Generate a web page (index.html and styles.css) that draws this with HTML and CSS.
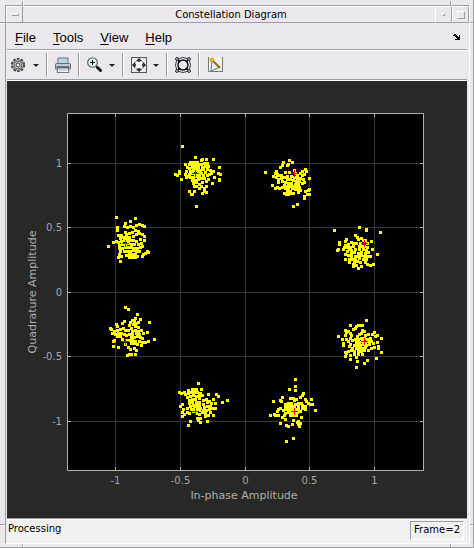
FILE: index.html
```html
<!DOCTYPE html>
<html lang="en">

<head>
  <meta charset="UTF-8">
  <meta name="viewport" content="width=device-width, initial-scale=1.0">
  <title>Constellation Diagram</title>
  <link rel="stylesheet" href="styles.css">
</head>

<body>

  <div class="window">
    <span class="notch notch-top notch-left"></span>
    <span class="notch notch-top notch-right"></span>
    <span class="notch notch-bottom notch-left"></span>
    <span class="notch notch-bottom notch-right"></span>
    <span class="notch-side side-top side-left"></span>
    <span class="notch-side side-top side-right"></span>
    <span class="notch-side side-bottom side-left"></span>
    <span class="notch-side side-bottom side-right"></span>

    <div class="frame">
      <header class="titlebar">
        <button class="title-button" aria-label="Window menu"><span class="bump bump-menu"></span></button>
        <h1>Constellation Diagram</h1>
        <button class="title-button" aria-label="Minimize"><span class="bump bump-min"></span></button>
        <button class="title-button" aria-label="Maximize"><span class="bump bump-max"></span></button>
      </header>

      <nav class="menubar">
        <button><u>F</u>ile</button>
        <button><u>T</u>ools</button>
        <button><u>V</u>iew</button>
        <button><u>H</u>elp</button>
        <button class="dock" aria-label="Dock">
          <svg width="8" height="7" viewBox="0 0 8 7" shape-rendering="crispEdges">
            <path d="M0 1h1v-1h2v1h1v1h1v1h1v-2h1v5h-5v-1h2v-1h-1v-1h-1v-1h-2z" fill="#000" />
          </svg>
        </button>
      </nav>

      <div class="toolbar">
        <div class="tool-group">
          <button class="tool" aria-label="Settings">
            <svg width="16" height="16" viewBox="0 0 16 16">
              <circle cx="7" cy="8" r="6.2" fill="none" stroke="#444" stroke-width="1.8" stroke-dasharray="2.6 1.3" />
              <circle cx="7" cy="8" r="4.4" fill="#ddd" stroke="#555" stroke-width="2.4" />
              <circle cx="7" cy="8" r="4.5" fill="none" stroke="#aaa" stroke-width="1.2" />
              <circle cx="7" cy="8" r="2" fill="#f4f4f4" stroke="#333" />
            </svg>
          </button>
          <button class="caret" aria-label="Settings options"></button>
        </div>
        <div class="tool-group">
          <button class="tool" aria-label="Print">
            <svg width="16" height="16" viewBox="0 0 16 16">
              <path d="M3 1h10v6H3z" fill="#d5e6f4" stroke="#668" />
              <path d="M4 3h8M4 5h8" stroke="#9dc3de" />
              <rect x="0.5" y="6.5" width="15" height="6" rx="1" fill="#a9adb4" stroke="#686c75" />
              <path d="M1 8h14" stroke="#dce0e5" />
              <path d="M2 10.5h12" stroke="#42474f" stroke-width="2" />
              <path d="M3 11h10l1 4.5H2z" fill="#f4f7fa" stroke="#777b84" />
              <path d="M4 13h8" stroke="#7eb2df" />
            </svg>
          </button>
        </div>
        <div class="tool-group">
          <button class="tool" aria-label="Zoom in">
            <svg width="16" height="16" viewBox="0 0 16 16">
              <path d="M9 9l2 2" stroke="#555" stroke-width="2" />
              <path d="M10.5 10.5l3 3" stroke="#111" stroke-width="3" stroke-linecap="round" />
              <circle cx="5.5" cy="5.5" r="4.8" fill="#e0f3f8" stroke="#555" stroke-width="1.1" />
              <path d="M3 5.5h5M5.5 3v5" stroke="#000" />
            </svg>
          </button>
          <button class="caret" aria-label="Zoom options"></button>
        </div>
        <div class="tool-group">
          <button class="tool" aria-label="Fit to view">
            <svg width="16" height="16" viewBox="0 0 16 16">
              <rect x="0.5" y="0.5" width="15" height="15" fill="#e7eef0" stroke="#555" />
              <rect x="4.5" y="4.5" width="7" height="7" fill="#fff" stroke="#bbb" />
              <path d="M8 1l3 3H5zM8 15l3-3H5zM1 8l3-3v6zM15 8l-3-3v6z" fill="#222" />
              <path d="M8 3v2M8 11v2M3 8h2M11 8h2" stroke="#444" stroke-width="2" />
            </svg>
          </button>
          <button class="caret" aria-label="Fit options"></button>
        </div>
        <div class="tool-group">
          <button class="tool" aria-label="Symbol trajectory">
            <svg width="16" height="16" viewBox="0 0 16 16" fill="none" stroke="#111">
              <path d="M2 2Q8 -1 14 2Q17 8 14 14Q8 17 2 14Q-1 8 2 2z" stroke="#333a66" />
              <circle cx="8" cy="8" r="5" stroke-width="1.4" />
              <path d="M3 3L6 4M13 3L10 4M3 13L6 12M13 13L10 12M3 3L4 6M13 3L12 6M3 13L4 10M13 13L12 10" />
              <g fill="#fff">
                <circle cx="2" cy="2" r="1.4" />
                <circle cx="14" cy="2" r="1.4" />
                <circle cx="2" cy="14" r="1.4" />
                <circle cx="14" cy="14" r="1.4" />
              </g>
            </svg>
          </button>
        </div>
        <div class="tool-group">
          <button class="tool" aria-label="Signal measurements">
            <svg width="16" height="16" viewBox="0 0 16 16">
              <rect x="1" y="0" width="14" height="15" fill="#f2f0e9" />
              <path d="M1.5 0v14.5H16M15.5 0v14" fill="none" stroke="#777" />
              <path d="M5 3L4 14L13 10z" fill="#e7f1f7" stroke="#4d7fa8" />
              <path d="M5 3L13 11" stroke="#986a16" stroke-width="2" />
              <circle cx="5" cy="3" r="2" fill="#f5b51c" stroke="#bc7e0e" stroke-width="0.6" />
            </svg>
          </button>
        </div>
      </div>

      <main class="plot">
        <svg viewBox="0 0 460 437" role="img" aria-label="Constellation Diagram">
          <rect class="axes" x="60.5" y="32.5" width="356" height="357" />
          <g id="grid"></g>
          <g id="clusters"></g>
          <g id="reference"></g>
          <text class="label" x="237" y="418">In-phase Amplitude</text>
          <text class="label" transform="translate(29 211) rotate(-90)">Quadrature Amplitude</text>
        </svg>
      </main>

      <footer class="statusbar">
        <span>Processing</span>
        <output class="frame-count">Frame=2</output>
      </footer>
    </div>
  </div>

  <script src="script.js"></script>
</body>

</html>
```

FILE: styles.css
```css
* {
  box-sizing: border-box;
}

body {
  margin: 0;
  background-color: #eae8ec;
  color: #000;
  font-family: "DejaVu Sans", sans-serif;
  font-size: 10px;
}

button {
  margin: 0;
  padding: 0;
  border: none;
  background: none;
  color: inherit;
  font: inherit;
}

.window {
  position: relative;
  min-height: 100vh;
  padding: 5px 3px 3px 5px;
  border-right: 1px solid #9f9da3;
  border-bottom: 1px solid #9f9da3;
  display: flex;
  flex-direction: column;
}

.frame {
  flex: 1;
  display: flex;
  flex-direction: column;
  border: 1px solid #fff;
  border-top-color: #9f9da3;
  border-left-color: #9f9da3;
}

/* resize handle marks on the outer border */
.notch,
.notch-side {
  position: absolute;
  background-color: #9f9da3;
}

.notch {
  width: 2px;
  height: 5px;
  border-right: 1px solid #fff;
}

.notch-side {
  width: 5px;
  height: 2px;
  border-bottom: 1px solid #fff;
}

.notch-top {
  top: 1px;
}

.notch-bottom {
  bottom: 0;
  height: 3px;
}

.notch-left {
  left: 22px;
}

.notch-right {
  right: 21px;
}

.side-top {
  top: 22px;
}

.side-bottom {
  bottom: 21px;
}

.side-left {
  left: 0;
}

.side-right {
  right: 0;
  width: 3px;
}

.titlebar {
  display: flex;
  height: 17px;
}

.titlebar h1 {
  flex: 1;
  margin: 0;
  padding-left: 4px;
  border-top: 1px solid #fff;
  border-bottom: 1px solid #9f9da3;
  font-size: 10px;
  font-weight: normal;
  line-height: 15px;
  text-align: center;
}

.title-button {
  width: 17px;
  display: flex;
  align-items: center;
  justify-content: center;
  border: 1px solid #fff;
  border-right-color: #9f9da3;
  border-bottom-color: #9f9da3;
}

.bump {
  border: 1px solid #fff;
  border-right-color: #9f9da3;
  border-bottom-color: #9f9da3;
}

.bump-menu {
  width: 8px;
  height: 3px;
}

.bump-min {
  width: 3px;
  height: 3px;
}

.bump-max {
  width: 8px;
  height: 8px;
}

.menubar {
  display: flex;
  gap: 17px;
  height: 28px;
  margin: 0 2px 0 1px;
  padding: 1px 6px 0 8px;
  border-bottom: 1px solid #fff;
  box-shadow: inset 0 -1px #9f9da3;
  font-family: "Liberation Sans", Arial, sans-serif;
  font-size: 13px;
}

.menubar u {
  text-underline-offset: 2px;
}

.dock {
  display: flex;
  align-items: center;
  margin-left: auto;
}

.toolbar {
  display: flex;
  height: 30px;
  margin: 0 2px 0 1px;
  padding: 2px 0 3px;
  border-bottom: 1px solid #fff;
  box-shadow: inset 0 -1px #9f9da3;
}

.tool-group {
  display: flex;
  padding: 0 7px 0 8px;
  border-right: 1px solid #9f9da3;
  box-shadow: 1px 0 #fff;
}

.tool-group:first-child {
  padding-left: 4px;
}

.tool-group:last-child {
  border-right: none;
  box-shadow: none;
}

.tool {
  width: 16px;
  display: flex;
  align-items: center;
}

.caret {
  width: 12px;
  display: flex;
  align-items: center;
  justify-content: flex-end;
}

.caret::after {
  content: "";
  border: 3px solid transparent;
  border-top-color: #222;
  border-bottom: none;
}

.plot {
  flex: 1;
  display: flex;
  margin: 0 2px 0 1px;
  background-color: #282828;
}

.plot svg {
  width: 100%;
  display: block;
}

.axes {
  fill: #000;
  stroke: #b0b0b0;
}

.grid-line {
  stroke: #383838;
}

.tick-mark {
  stroke: #b0b0b0;
}

.tick {
  fill: #a5a5a5;
  font-size: 10px;
}

.tick-x,
.label {
  text-anchor: middle;
}

.tick-y {
  text-anchor: end;
}

.label {
  fill: #afafaf;
  font-size: 11px;
}

.points {
  fill: #ff0;
  shape-rendering: crispEdges;
}

.cross {
  fill: #f00;
  shape-rendering: crispEdges;
}

.statusbar {
  display: flex;
  justify-content: space-between;
  height: 25px;
  margin: 0 2px 0 1px;
  padding: 2px 3px 3px 1px;
  border-top: 1px solid #9f9da3;
  box-shadow: inset 0 1px #fff;
  background-color: #f0f0f0;
  line-height: 16px;
}

.frame-count {
  padding: 0 3px;
  border: 1px solid #fff;
  border-top-color: #9f9da3;
  border-left-color: #9f9da3;
}
```

FILE: script.js
```javascript
// tick value -> pixel position inside the plot
const xTicks = [['-1', 108.5], ['-0.5', 173.5], ['0', 238.5], ['0.5', 302.5], ['1', 367.5]];
const yTicks = [['1', 82.5], ['0.5', 146.5], ['0', 211.5], ['-0.5', 275.5], ['-1', 340.5]];

// received symbols, grouped around each constellation point
const clusters = [
  {
    x: 158, y: 59, points: '17,6 30,17 37,19 36,20 41,19 48,19 20,24 24,24 25,22 28,22 30,22 32,22 27,24 30,25 33,24 36,24 39,23 42,23 43,26 40,26 37,27 33,27 30,28 27,27 24,28 22,27 28,30 32,30 25,31 21,31 35,30 38,29 42,29 45,30 48,31 46,33 54,27 53,33 55,34 10,34 12,35 14,31 14,33 16,39 20,34 22,36 24,34 27,33 30,34 33,33 36,33 40,32 21,37 25,37 28,37 31,36 34,36 38,35 42,35 44,34 49,37 27,40 30,40 33,39 36,38 39,38 43,39 41,41 54,39 54,40 28,43 31,42 34,44 37,42 29,46 31,46 34,48 36,46 39,48 41,46 47,43 24,51 29,51 27,54 26,54 37,53 39,51 41,52 31,66'
  },
  {
    x: 258, y: 69, points: '0,22 24,10 22,15 23,14 27,12 18,12 17,15 15,17 11,21 8,26 7,35 10,23 12,24 11,27 14,25 16,25 13,29 16,28 19,27 22,26 20,22 24,22 29,20 30,23 32,25 35,23 37,21 37,25 40,19 41,21 39,24 26,26 29,27 32,28 35,28 22,29 25,29 28,30 31,31 34,31 38,29 44,28 17,31 13,32 20,32 23,33 26,33 30,34 33,34 37,33 39,32 19,35 22,36 25,36 28,36 31,37 34,37 10,38 12,37 14,38 17,37 20,38 23,39 27,38 30,39 33,40 35,40 19,43 22,41 25,41 21,44 24,43 26,43 28,43 23,44 33,42 44,39 43,40 40,41 42,44 44,44 39,46 39,48 28,56 32,54'
  },
  {
    x: 93, y: 129, points: '16,7 35,8 30,11 25,13 24,16 27,17 30,16 33,17 36,15 39,14 42,15 44,16 17,17 17,20 25,22 26,24 29,23 32,22 35,20 38,21 18,25 21,25 20,28 23,27 26,27 29,27 33,26 36,24 39,23 42,24 44,26 18,32 16,31 13,32 21,31 24,30 27,30 30,30 33,30 36,31 40,29 44,30 8,36 19,35 22,34 25,34 28,33 31,34 34,34 38,34 41,33 19,38 22,38 25,37 28,37 31,37 34,38 37,38 40,37 42,36 24,41 27,41 30,41 33,40 36,41 39,41 20,41 19,44 21,46 26,45 29,44 32,44 35,44 37,46 29,47 32,47 35,47 43,44 42,46 45,43 48,42 47,41 20,51 18,47'
  },
  {
    x: 318, y: 139, points: '9,10 34,7 41,9 41,10 55,12 30,15 32,17 33,19 36,18 38,20 21,19 20,21 14,22 14,24 20,25 23,24 26,22 28,23 31,23 35,23 37,26 40,20 42,23 46,21 42,27 13,29 12,30 18,29 19,27 22,27 25,27 28,26 34,26 39,26 47,29 52,34 24,29 26,30 30,29 34,29 38,29 41,30 22,31 20,34 26,33 29,32 33,33 36,32 40,33 43,32 23,35 26,36 30,36 33,36 36,35 39,36 42,36 45,36 24,39 27,39 30,39 34,38 38,39 41,39 24,42 29,42 32,41 35,42 40,42 42,44 45,45 48,44 28,44 31,45 33,48 28,46 20,39 36,46'
  },
  {
    x: 93, y: 219, points: '25,7 28,9 37,14 49,22 35,18 32,20 34,21 30,22 24,21 22,23 29,25 33,24 36,23 38,22 40,19 31,28 35,26 38,27 10,28 11,29 16,24 17,26 14,31 17,30 20,29 23,28 25,30 28,30 32,31 35,30 38,31 41,30 12,33 15,34 18,33 21,33 24,34 29,34 32,34 36,33 39,34 43,33 47,32 17,36 20,36 26,35 31,37 34,37 37,36 40,37 42,38 54,39 48,41 45,42 42,42 22,39 26,40 29,40 32,40 35,41 39,41 41,45 37,44 34,43 31,43 25,44 13,41 14,40 13,46 18,47 28,47 30,49 34,48 36,50 35,54 31,54 29,54 27,55'
  },
  {
    x: 323, y: 229, points: '36,10 20,15 32,15 30,15 28,15 26,16 25,18 23,19 15,20 16,22 18,21 8,26 12,29 13,33 15,25 16,29 20,23 21,25 20,28 22,30 32,20 34,21 31,23 29,24 27,26 35,25 38,24 44,22 42,24 45,26 47,25 51,28 47,32 18,31 20,34 19,36 25,29 28,29 31,28 34,28 37,29 40,28 26,32 29,32 32,31 35,32 38,31 41,31 24,35 27,35 30,35 33,34 36,35 39,34 43,33 13,35 48,36 48,38 44,37 41,38 51,42 22,38 26,38 29,38 32,38 35,37 16,43 15,42 18,41 21,40 24,41 28,41 31,41 34,40 38,40 15,46 20,45 24,44 28,44 32,44 20,49 26,47 46,48 37,50 27,51 34,53 26,57'
  },
  {
    x: 158, y: 289, points: '33,13 14,22 16,23 19,22 23,20 27,19 29,19 31,19 36,19 20,24 23,23 26,22 29,22 32,22 35,23 22,27 25,26 28,25 31,26 34,25 37,25 43,24 24,30 27,29 30,29 34,28 51,24 53,26 57,32 62,30 24,33 27,32 31,32 34,32 38,30 41,29 44,31 48,29 15,36 17,34 18,39 17,42 19,44 17,46 25,36 28,35 31,35 34,35 38,34 42,32 46,33 50,33 50,38 22,38 26,39 29,38 32,38 35,38 39,37 42,36 45,36 22,42 24,43 28,41 31,41 34,40 38,40 41,40 44,39 47,38 48,45 45,42 43,45 40,43 37,42 34,44 31,43 32,48 33,50 35,48 25,51 23,55 35,52 42,51 40,46'
  },
  {
    x: 253, y: 289, points: '35,9 35,16 35,20 29,19 13,31 22,27 20,30 21,31 43,23 42,25 40,27 30,28 33,28 36,29 34,30 45,29 46,31 51,29 50,34 52,34 55,40 10,45 15,45 14,44 18,45 28,33 31,33 25,34 38,33 41,33 35,34 48,33 25,37 28,36 31,36 34,36 38,36 42,35 45,36 18,39 17,41 20,38 23,40 26,39 29,39 32,39 35,39 38,39 42,38 45,39 25,43 28,42 31,42 34,42 37,42 40,41 30,45 33,45 36,45 24,45 22,47 25,49 20,53 26,55 28,56 33,50 32,54 38,51 38,54 37,52 39,56 40,53 41,47 33,68 26,71'
  }
];

function svg(parent, name, attrs, text) {
  const el = document.createElementNS('http://www.w3.org/2000/svg', name);
  for (const key in attrs) {
    el.setAttribute(key, attrs[key]);
  }
  if (text) {
    el.textContent = text;
  }
  document.getElementById(parent).appendChild(el);
}

function line(parent, className, x1, y1, x2, y2) {
  svg(parent, 'line', { class: className, x1: x1, y1: y1, x2: x2, y2: y2 });
}

xTicks.forEach(function ([text, x]) {
  line('grid', 'grid-line', x, 33, x, 389);
  line('grid', 'tick-mark', x, 386, x, 389);
  line('grid', 'tick-mark', x, 33, x, 36);
  svg('grid', 'text', { class: 'tick tick-x', x: x, y: 403 }, text);
});

yTicks.forEach(function ([text, y]) {
  line('grid', 'grid-line', 61, y, 416, y);
  line('grid', 'tick-mark', 61, y, 64, y);
  line('grid', 'tick-mark', 413, y, 416, y);
  svg('grid', 'text', { class: 'tick tick-y', x: 55, y: y + 3.5 }, text);
});

// every symbol is a 3px square
clusters.forEach(function (cluster) {
  const d = cluster.points.split(' ').map(function (pair) {
    const [x, y] = pair.split(',').map(Number);
    return `M${cluster.x + x - 1} ${cluster.y + y - 1}h3v3h-3z`;
  }).join('');
  svg('clusters', 'path', { class: 'points', d: d });
});

// ideal 8-PSK symbols, offset by pi/8
for (let i = 0; i < 8; i++) {
  const angle = Math.PI / 8 + i * Math.PI / 4;
  const x = Math.round(237.5 + 129 * Math.cos(angle));
  const y = Math.round(211 - 129 * Math.sin(angle));
  svg('reference', 'path', { class: 'cross', d: `M${x - 3} ${y}h7v1h-7zM${x} ${y - 3}h1v7h-1z` });
}
```
